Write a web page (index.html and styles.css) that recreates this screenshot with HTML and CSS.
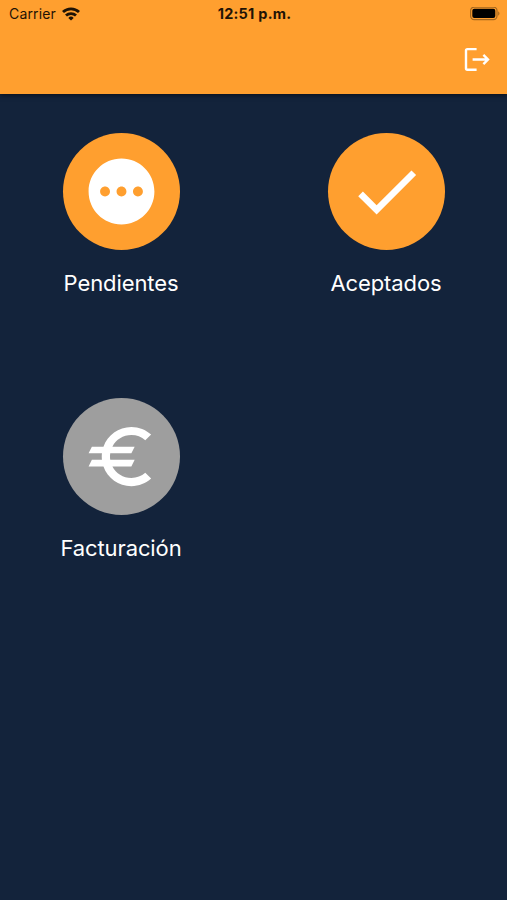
FILE: index.html
```html
<!DOCTYPE html>
<html lang="es">
<head>
    <meta charset="UTF-8">
    <meta name="viewport" content="width=device-width, initial-scale=1.0">
    <title>Inicio</title>
    <link rel="stylesheet" href="styles.css">
</head>
<body>
    <header class="app-bar">
        <div class="status-bar">
            <div class="carrier">
                <span>Carrier</span>
                <svg class="wifi" viewBox="0 0 18 14" fill="none" stroke="currentColor" stroke-width="2.8">
                    <path d="M1 5.1a11.4 11.4 0 0 1 16 0"/>
                    <path d="M4 8.6a7.2 7.2 0 0 1 10 0"/>
                    <path d="M9 13.6L6.3 10.9a3.9 3.9 0 0 1 5.4 0z" fill="currentColor" stroke="none"/>
                </svg>
            </div>
            <div class="time">12:51 p.m.</div>
            <svg class="battery" viewBox="0 0 30 14">
                <rect x="0.6" y="0.1" width="26.4" height="12.6" rx="3.6" fill="none" stroke="#a4671f" stroke-width="1.2"/>
                <rect x="2.3" y="1.8" width="23" height="9.2" rx="2" fill="#000"/>
                <path d="M28.2 4.3v4.4c1.7-.8 1.7-3.6 0-4.4z" fill="#a4671f"/>
            </svg>
        </div>
        <div class="toolbar">
            <button class="logout" aria-label="Salir">
                <svg viewBox="0 0 26 24" fill="none" stroke="currentColor" stroke-width="2.4">
                    <path d="M12.6 2.1H3.4a1.4 1.4 0 0 0-1.4 1.4v17.8a1.4 1.4 0 0 0 1.4 1.4h9.2"/>
                    <path d="M8.6 12.5h15.4M19.4 7.9L24 12.5l-4.6 4.6"/>
                </svg>
            </button>
        </div>
    </header>

    <main class="menu">
        <a class="item">
            <span class="circle">
                <svg viewBox="0 0 24 24" fill="currentColor">
                    <path d="M12 2C6.48 2 2 6.48 2 12s4.48 10 10 10 10-4.48 10-10S17.52 2 12 2zM7 13.5c-.83 0-1.5-.67-1.5-1.5s.67-1.5 1.5-1.5 1.5.67 1.5 1.5-.67 1.5-1.5 1.5zm5 0c-.83 0-1.5-.67-1.5-1.5s.67-1.5 1.5-1.5 1.5.67 1.5 1.5-.67 1.5-1.5 1.5zm5 0c-.83 0-1.5-.67-1.5-1.5s.67-1.5 1.5-1.5 1.5.67 1.5 1.5-.67 1.5-1.5 1.5z"/>
                </svg>
            </span>
            <span class="label">Pendientes</span>
        </a>
        <a class="item">
            <span class="circle">
                <svg viewBox="0 0 24 24" fill="currentColor">
                    <path d="M9 16.17L4.83 12l-1.42 1.41L9 19 21 7l-1.41-1.41z"/>
                </svg>
            </span>
            <span class="label">Aceptados</span>
        </a>
        <a class="item">
            <span class="circle disabled">
                <svg viewBox="0 0 24 24" fill="currentColor">
                    <path d="M15 18.5c-2.51 0-4.68-1.42-5.76-3.5H15l1-2H8.58c-.05-.33-.08-.66-.08-1s.03-.67.08-1H15l1-2H9.24C10.32 6.92 12.5 5.5 15 5.5c1.61 0 3.09.59 4.23 1.57L21 5.3C19.41 3.87 17.3 3 15 3c-3.92 0-7.24 2.51-8.48 6H3l-1 2h4.06c-.04.33-.06.66-.06 1s.02.67.06 1H3l-1 2h4.52c1.24 3.49 4.56 6 8.48 6 2.31 0 4.41-.87 6-2.3l-1.78-1.77c-1.13.98-2.6 1.57-4.22 1.57z"/>
                </svg>
            </span>
            <span class="label">Facturación</span>
        </a>
    </main>
</body>
</html>
```

FILE: styles.css
```css
:root {
    --orange: #ff9f2f;
    --navy: #13233b;
    --grey: #9e9e9e;
}

* {
    margin: 0;
    padding: 0;
    box-sizing: border-box;
}

body {
    background-color: var(--navy);
    color: #fff;
    font-family: Inter, Roboto, sans-serif;
    min-height: 100vh;
}

.app-bar {
    height: 94px;
    background-color: var(--orange);
    box-shadow: 0 1px 5px rgba(0, 0, 0, 0.6);
}

.status-bar {
    display: grid;
    grid-template-columns: 1fr auto 1fr;
    align-items: center;
    height: 27px;
    padding: 0 7px 0 9px;
    color: #1f1305;
    font-size: 14px;
}

.carrier {
    display: flex;
    align-items: center;
    gap: 6px;
    letter-spacing: 0.15px;
}

.wifi {
    width: 18px;
    height: 14px;
}

.time {
    font-weight: 700;
    font-size: 14.5px;
    letter-spacing: 0.25px;
}

.battery {
    justify-self: end;
    width: 30px;
    height: 14px;
}

.toolbar {
    display: flex;
    justify-content: flex-end;
    padding: 20px 17px 0 0;
}

.logout {
    width: 26px;
    height: 24px;
    background: none;
    border: none;
    color: #fff;
}

.logout svg {
    display: block;
}

.menu {
    display: grid;
    grid-template-columns: 242px 242px;
    grid-auto-rows: 242px;
    gap: 23px;
    padding-top: 39px;
}

.item {
    display: flex;
    flex-direction: column;
    align-items: center;
    gap: 20px;
}

.circle {
    display: flex;
    align-items: center;
    justify-content: center;
    width: 117px;
    height: 117px;
    border-radius: 50%;
    background-color: var(--orange);
}

.circle.disabled {
    background-color: var(--grey);
}

.circle svg {
    width: 79px;
    height: 79px;
}

.label {
    font-size: 22px;
    line-height: 26px;
    letter-spacing: -0.1px;
}
```
